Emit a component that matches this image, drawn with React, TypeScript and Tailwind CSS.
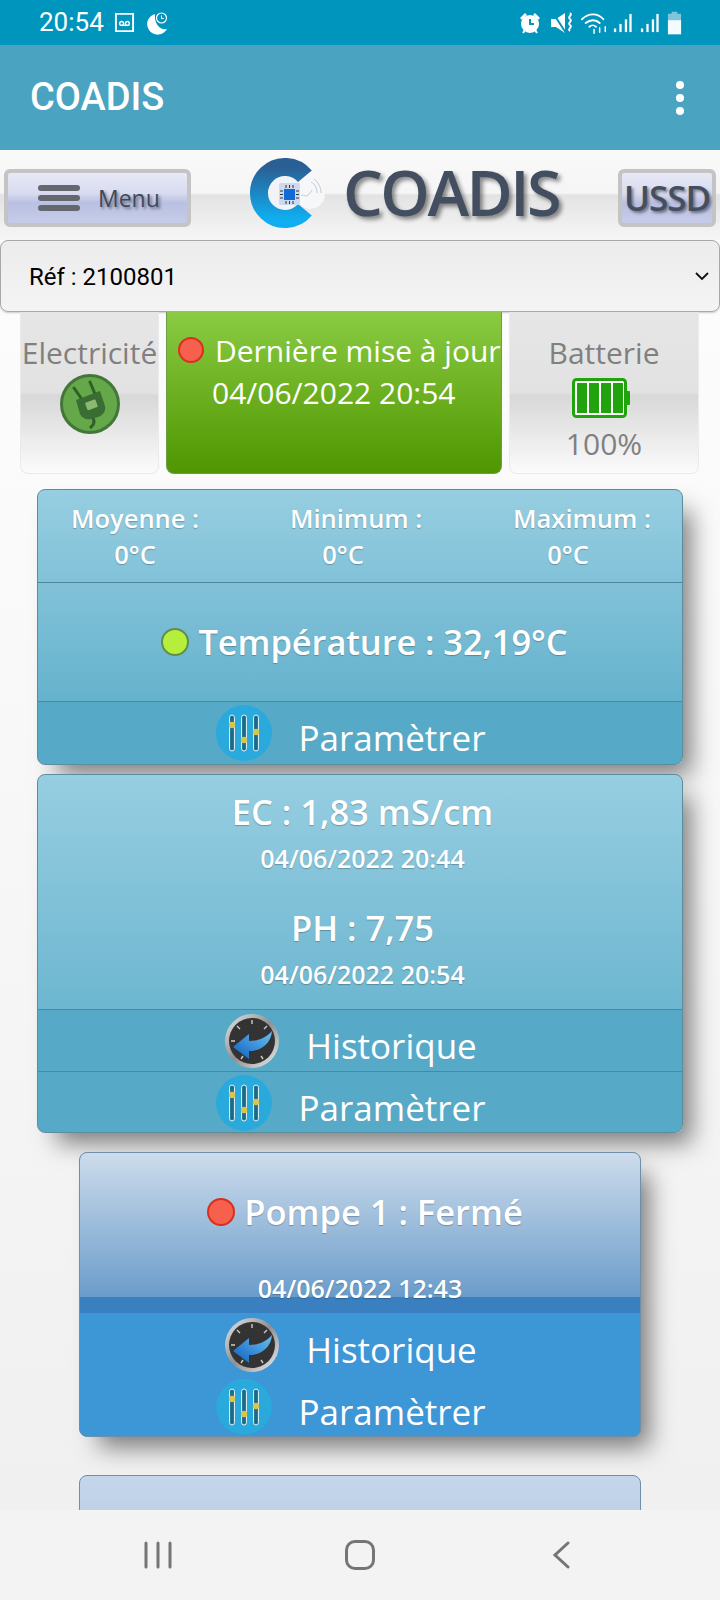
import React from "react";

const glow = "[text-shadow:0_1px_1px_rgba(0,0,0,0.25)]";
const cardShadow = "[box-shadow:14px_16px_24px_-6px_rgba(0,0,0,0.5)]";

function Dot({ color, edge, size = "h-[28px] w-[28px]" }: { color: string; edge: string; size?: string }) {
  return <span className={`inline-block shrink-0 rounded-full border-2 ${size} ${color} ${edge}`} />;
}

function SlidersIcon() {
  return (
    <svg viewBox="0 0 56 56" className="h-[56px] w-[56px] shrink-0">
      <circle cx="28" cy="28" r="28" fill="#2aa9dd" />
      {[16, 28, 40].map((x) => (
        <rect key={x} x={x - 2.4} y="10" width="4.8" height="36" rx="2.4" fill="#1a6a88" stroke="#fff" strokeWidth="0.9" />
      ))}
      <circle cx="16" cy="20" r="3.2" fill="#d8c54a" />
      <circle cx="28" cy="35" r="3.2" fill="#d8c54a" />
      <circle cx="40" cy="27" r="3.2" fill="#d8c54a" />
    </svg>
  );
}

function HistoryIcon() {
  return (
    <svg viewBox="0 0 54 54" className="h-[54px] w-[54px] shrink-0">
      <defs>
        <linearGradient id="rim" x1="0" y1="0" x2="1" y2="1">
          <stop offset="0" stopColor="#e8e8e8" />
          <stop offset="0.5" stopColor="#8f8f8f" />
          <stop offset="1" stopColor="#f0f0f0" />
        </linearGradient>
        <linearGradient id="arrow" x1="0" y1="1" x2="1" y2="0">
          <stop offset="0" stopColor="#0d5fc0" />
          <stop offset="1" stopColor="#6cc0f0" />
        </linearGradient>
      </defs>
      <circle cx="27" cy="27" r="27" fill="url(#rim)" />
      <circle cx="27" cy="27" r="23" fill="#333" />
      <path d="M27 6v4M12 12l3 3M42 12l-3 3M6 27h4M16 45l2-3M38 45l-2-3" stroke="#ccc" strokeWidth="1.4" />
      <path d="M8 33L24 20v7c9 0 17-3 23-10-1 12-10 20-23 20v8z" fill="url(#arrow)" />
    </svg>
  );
}

function LinkRow({ label, kind, tone = "teal" }: { label: string; kind: "param" | "hist"; tone?: "teal" | "blue" }) {
  const isParam = kind === "param";
  return (
    <div
      className={`flex h-[62px] items-center justify-center overflow-hidden border-t pr-[18px] ${
        tone === "teal" ? "border-[#4f8698] bg-[#57aac7]" : "border-[#5c8db8] bg-[#3d96d6]"
      } ${isParam ? "gap-[26px]" : "gap-[27px]"}`}
    >
      {isParam ? <SlidersIcon /> : <HistoryIcon />}
      <span className="pt-[9px] text-[35px] leading-none text-white">{label}</span>
    </div>
  );
}

function Stat({ label, valueClass = "" }: { label: string; valueClass?: string }) {
  return (
    <div className={`text-center text-[25.5px] font-semibold leading-[36px] text-white ${glow}`}>
      <div>{label}</div>
      <div className={valueClass}>0°C</div>
    </div>
  );
}

function StatusBar() {
  return (
    <div className="flex h-[45px] shrink-0 items-center justify-between bg-[#0095bd] pl-[39px] pr-[38px] text-white [font-family:Roboto,sans-serif]">
      <div className="flex items-center gap-[10px]">
        <span className="text-[26px]">20:54</span>
        <svg viewBox="0 0 22 22" className="h-[21px] w-[21px]" fill="none" stroke="#fff" strokeWidth="2">
          <path d="M2 2h18v18H2z" />
          <circle cx="8" cy="12" r="2" strokeWidth="1.5" />
          <circle cx="14" cy="12" r="2" strokeWidth="1.5" />
          <path d="M8 14h6" strokeWidth="1.5" />
        </svg>
        <svg viewBox="0 0 24 24" className="h-[24px] w-[24px]" fill="#fff">
          <path d="M10 3A10.5 10.5 0 1 0 22 18C15 20 9 12 10 3z" />
          <circle cx="16.5" cy="7" r="5" fill="none" stroke="#fff" strokeWidth="1.2" />
          <path d="M16.5 4.5v3h2.2" stroke="#fff" strokeWidth="1" fill="none" />
        </svg>
      </div>
      <div className="flex items-center gap-[4px]">
        <svg viewBox="0 0 24 24" className="h-[24px] w-[24px]" fill="#fff">
          <circle cx="12" cy="13" r="9" />
          <path d="M2 7l5-5 2 2-5 5zM22 7l-5-5-2 2 5 5z" />
          <path d="M12 8v5h4" stroke="#0095bd" strokeWidth="2" fill="none" />
          <path d="M5 22l2-3M19 22l-2-3" stroke="#fff" strokeWidth="2" />
        </svg>
        <svg viewBox="0 0 24 24" className="ml-[4px] h-[24px] w-[24px]" fill="#fff">
          <path d="M1 8h5l9-6v20L6 16H1z" />
          <path d="M3 2l13 20" stroke="#0095bd" strokeWidth="2" />
          <path d="M20 2c3 2-3 4 0 6s-3 4 0 6-3 4 0 6" stroke="#fff" strokeWidth="2" fill="none" />
        </svg>
        <svg viewBox="0 0 30 24" className="ml-[3px] h-[24px] w-[28px]" fill="none" stroke="#fff" strokeWidth="2" strokeLinecap="round">
          <path d="M1 8c7-7 17-7 23 0M5 12c5-4 11-4 15 0M9 16c2-2 5-2 7 0" />
          <path d="M14 19v4M20 17v5M26 16v5" strokeWidth="1.6" />
        </svg>
        <svg viewBox="0 0 22 24" className="h-[24px] w-[20px]" fill="#fff">
          <rect x="1" y="18" width="2.5" height="4" />
          <rect x="7" y="13" width="2.5" height="9" />
          <rect x="13" y="8" width="2.5" height="14" />
          <rect x="18" y="2" width="2.5" height="20" />
        </svg>
        <svg viewBox="0 0 22 24" className="ml-[3px] h-[24px] w-[20px]" fill="#fff">
          <rect x="1" y="18" width="2.5" height="4" />
          <rect x="7" y="13" width="2.5" height="9" />
          <rect x="13" y="8" width="2.5" height="14" />
          <rect x="18" y="2" width="2.5" height="20" />
        </svg>
        <svg viewBox="0 0 16 26" className="ml-[3px] h-[26px] w-[15px]">
          <path d="M5 1h6v2h4v22H1V3h4z" fill="#7cc5dc" />
          <rect x="1" y="10" width="14" height="15" fill="#f2fbfd" />
        </svg>
      </div>
    </div>
  );
}

function TopBar() {
  return (
    <div className="flex h-[105px] shrink-0 items-center justify-between bg-[#4aa3c0] pl-[30px] pr-[36px]">
      <span className="text-[38px] font-medium text-white [font-family:Roboto,sans-serif]">COADIS</span>
      <div className="flex flex-col gap-[5px]">
        <span className="h-[8px] w-[8px] rounded-full bg-white" />
        <span className="h-[8px] w-[8px] rounded-full bg-white" />
        <span className="h-[8px] w-[8px] rounded-full bg-white" />
      </div>
    </div>
  );
}

function Logo() {
  return (
    <svg viewBox="0 0 76 72" className="h-[72px] w-[76px] shrink-0">
      <defs>
        <linearGradient id="logoC" x1="0" y1="0" x2="0" y2="1">
          <stop offset="0" stopColor="#2a5f94" />
          <stop offset="1" stopColor="#10aef0" />
        </linearGradient>
      </defs>
      <circle cx="35" cy="35" r="18" fill="#f1f3f6" />
      <circle cx="60" cy="36" r="15" fill="#f6f7f8" />
      <path d="M54.9 18.3A26 26 0 1 0 54.9 51.7" fill="none" stroke="url(#logoC)" strokeWidth="18" />
      <rect x="29" y="25" width="21" height="22" rx="2" fill="#ccd9ee" />
      <rect x="34" y="31" width="11" height="11" fill="#1269d8" />
      <path d="M36 27v3M39.500 27v3M43 27v3M36 43v3M39.500 43v3M43 43v3M30 33h3M30 36.500h3M30 40h3M46 33h3M46 36.500h3M46 40h3" stroke="#333" strokeWidth="1" />
      <path d="M51 38c3-3 4 2 7-1s3-3 4-5M61 24c4 2 6 6 6 11M64 21c4 3 7 8 7 14" stroke="#bfcbd8" strokeWidth="1" fill="none" />
    </svg>
  );
}

function Header() {
  return (
    <div className="flex h-[90px] shrink-0 items-start justify-between bg-[linear-gradient(#fafafa_0,#f5f5f5_48%,#e3e3e3_50%,#f6f6f6_100%)] pl-[4px] pr-[4px]">
      <button className="mt-[19px] flex h-[58px] w-[187px] items-center rounded-[6px] border-[4px] border-[#c4c4c4] bg-[linear-gradient(#e7e9f6,#d9dcf0_40%,#b9c0e2_60%,#c6cce8)] pl-[30px]">
        <span className="flex w-[42px] flex-col gap-[4px]">
          <span className="h-[6px] rounded-full bg-[#64676e]" />
          <span className="h-[6px] rounded-full bg-[#64676e]" />
          <span className="h-[6px] rounded-full bg-[#64676e]" />
        </span>
        <span className="ml-[18px] text-[23px] font-normal text-[#3d4a5c] [text-shadow:2px_2px_3px_rgba(0,0,0,0.45)]">Menu</span>
      </button>
      <div className="mt-[8px] flex items-center">
        <Logo />
        <span className="mb-[6px] ml-[17px] text-[63px] font-semibold leading-none tracking-[-2.5px] text-[#434f60] [text-shadow:3px_3px_4px_rgba(0,0,0,0.45)]">
          COADIS
        </span>
      </div>
      <button className="mt-[19px] flex h-[58px] w-[98px] items-center justify-center rounded-[6px] border-[4px] border-[#c4c4c4] bg-[linear-gradient(#e7e9f6,#d9dcf0_40%,#b9c0e2_60%,#c6cce8)] text-[35px] font-semibold tracking-[-1px] text-[#434f60] [text-shadow:2px_2px_3px_rgba(0,0,0,0.45)]">
        USSD
      </button>
    </div>
  );
}

function RefSelect() {
  return (
    <div className="flex h-[72px] shrink-0 items-center justify-between rounded-[8px] border border-[#a8a8a8] bg-[linear-gradient(#ececec,#f4f4f4)] pl-[28px] pr-[9px] [box-shadow:0_1px_2px_rgba(0,0,0,0.2)]">
      <span className="pt-[2px] text-[24px] text-black [font-family:Roboto,sans-serif]">Réf : 2100801</span>
      <svg viewBox="0 0 16 16" className="h-[16px] w-[16px]" fill="none" stroke="#111" strokeWidth="1.8">
        <path d="M2 5l6 6 6-6" />
      </svg>
    </div>
  );
}

function PlugIcon() {
  return (
    <svg viewBox="0 0 60 60" className="h-[60px] w-[60px]">
      <circle cx="30" cy="30" r="28.5" fill="#64a84a" stroke="#44763a" strokeWidth="3" />
      <path d="M14 14l7 10M30 8l5 12" stroke="#2f5f2b" strokeWidth="3" strokeLinecap="round" />
      <path d="M16 26l24-9 5 15c1 5-2 9-7 11l-7 2c-5 1-9-1-11-5z" fill="#3a6d33" />
      <rect x="26" y="27" width="11" height="8" rx="1" fill="#8cb86f" transform="rotate(-20 31 31)" />
      <path d="M33 44c2 4 1 7-3 10" stroke="#2f5f2b" strokeWidth="3" fill="none" />
    </svg>
  );
}

function BatteryIcon() {
  return (
    <svg viewBox="0 0 58 40" className="h-[40px] w-[58px]">
      <rect x="1.500" y="1.500" width="52" height="37" rx="3" fill="#fff" stroke="#21a30d" strokeWidth="3" />
      <rect x="54" y="13" width="4" height="14" rx="1" fill="#21a30d" />
      {[5, 17, 29, 41].map((x) => (
        <rect key={x} x={x} y="5" width="10" height="30" fill="#21a30d" />
      ))}
    </svg>
  );
}

function Tiles() {
  const grey = "bg-[linear-gradient(#e6e6e6,#e2e2e2_50%,#d8d8d8_52%,#f0f0f0_85%,#fbfbfb)]";
  return (
    <div className="flex shrink-0 gap-[7px] pl-[20px] pr-[21px]">
      <div className={`flex h-[162px] w-[139px] flex-col items-center rounded-b-[8px] border border-t-0 border-[#eaeaea] ${grey}`}>
        <span className="mt-[22px] text-[30px] leading-[38px] text-[#808080]">Electricité</span>
        <span className="mt-[2px]"><PlugIcon /></span>
      </div>
      <div className="relative h-[162px] w-[336px] rounded-b-[8px] border border-t-0 border-[#6f9c4b] bg-[linear-gradient(#8acb43,#4f9600)] text-[30px] leading-[42px] text-white">
        <span className="absolute left-[11px] top-[19px]">
          <Dot color="bg-[#f6604c]" edge="border-[#d8301c]" size="h-[26px] w-[26px]" />
        </span>
        <div className="mt-[18px] whitespace-nowrap pl-[48px]">Dernière mise à jour</div>
        <div className="pl-[45px]">04/06/2022 20:54</div>
      </div>
      <div className={`flex h-[162px] w-[190px] flex-col items-center rounded-b-[8px] border border-t-0 border-[#eaeaea] ${grey}`}>
        <span className="mt-[22px] text-[30px] leading-[38px] text-[#808080]">Batterie</span>
        <span className="mr-[7px] mt-[6px]"><BatteryIcon /></span>
        <span className="mt-[3px] text-[30px] leading-[46px] text-[#808080]">100%</span>
      </div>
    </div>
  );
}

function TemperatureCard() {
  return (
    <div className={`mx-[37px] mt-[15px] h-[276px] shrink-0 overflow-hidden rounded-[8px] border border-[#5d8c9f] bg-[linear-gradient(#97cee1,#57aac7)] ${cardShadow}`}>
      <div className="flex h-[92px] items-center justify-between pl-[33px] pr-[31px]">
        <Stat label="Moyenne :" />
        <Stat label="Minimum :" valueClass="pr-[26px]" />
        <Stat label="Maximum :" valueClass="pr-[28px]" />
      </div>
      <div className={`flex h-[119px] items-center justify-center gap-[9px] border-t border-[#4f8698] pl-[9px] text-[34.5px] font-semibold tracking-[-0.1px] text-white ${glow}`}>
        <Dot color="bg-[#b6ee3c]" edge="border-[#5f8f4a]" />
        <span>Température : 32,19°C</span>
      </div>
      <LinkRow label="Paramètrer" kind="param" />
    </div>
  );
}

function EcCard() {
  return (
    <div className={`mx-[37px] mt-[9px] h-[359px] shrink-0 overflow-hidden rounded-[8px] border border-[#5d8c9f] bg-[linear-gradient(#97cee1,#57aac7)] ${cardShadow}`}>
      <div className={`flex h-[234px] flex-col items-center pl-[5px] font-semibold text-white ${glow}`}>
        <span className="mt-[13px] text-[34.5px] leading-[48px]">EC : 1,83 mS/cm</span>
        <span className="mt-[4px] text-[25px] leading-[36px]">04/06/2022 20:44</span>
        <span className="mt-[28px] text-[34.5px] leading-[48px]">PH : 7,75</span>
        <span className="mt-[4px] text-[25px] leading-[36px]">04/06/2022 20:54</span>
      </div>
      <LinkRow label="Historique" kind="hist" />
      <LinkRow label="Paramètrer" kind="param" />
    </div>
  );
}

function PumpCard() {
  return (
    <div className={`mx-[79px] mt-[19px] h-[285px] shrink-0 overflow-hidden rounded-[8px] border border-[#6f8ea8] bg-[#3d96d6] ${cardShadow}`}>
      <div className={`relative flex h-[144px] flex-col items-center bg-[linear-gradient(#cddcec,#6a9cca)] pl-[10px] font-semibold text-white ${glow}`}>
        <div className="mt-[35px] flex items-center gap-[9px] text-[34.5px] leading-[48px]">
          <Dot color="bg-[#f6604c]" edge="border-[#d8301c]" />
          <span>Pompe 1 : Fermé</span>
        </div>
      </div>
      <div className="relative h-[16px] bg-[#3a80c0]">
        <span className={`absolute bottom-[7px] left-0 right-0 text-center text-[25px] font-semibold leading-[36px] text-white ${glow}`}>
          04/06/2022 12:43
        </span>
      </div>
      <LinkRow label="Historique" kind="hist" tone="blue" />
      <LinkRow label="Paramètrer" kind="param" tone="blue" />
    </div>
  );
}

function NavBar() {
  return (
    <div className="flex h-[90px] shrink-0 items-center justify-between bg-[#f3f3f3] pl-[144px] pr-[150px]">
      <svg viewBox="0 0 28 28" className="h-[28px] w-[28px]" stroke="#757575" strokeWidth="3" strokeLinecap="round">
        <path d="M2 2v24M14 2v24M26 2v24" />
      </svg>
      <span className="mr-[4px] h-[30px] w-[30px] rounded-[10px] border-[3px] border-[#757575]" />
      <svg viewBox="0 0 18 28" className="h-[28px] w-[18px]" fill="none" stroke="#757575" strokeWidth="3" strokeLinecap="round">
        <path d="M16 2L3 14l13 12" />
      </svg>
    </div>
  );
}

export default function App() {
  return (
    <div className="flex h-[1600px] w-[720px] flex-col overflow-hidden bg-white [font-family:'Open_Sans',sans-serif]">
      <StatusBar />
      <TopBar />
      <main className="flex min-h-0 flex-1 flex-col overflow-hidden bg-[linear-gradient(#fdfdfd,#fafafa_30%,#f0f0f0)]">
        <Header />
        <RefSelect />
        <Tiles />
        <TemperatureCard />
        <EcCard />
        <PumpCard />
        <div className="mx-[79px] mt-[38px] h-[120px] shrink-0 rounded-[8px] border border-[#6f8ea8] bg-[linear-gradient(#c4d6ea,#aec6e0)]" />
      </main>
      <NavBar />
    </div>
  );
}
